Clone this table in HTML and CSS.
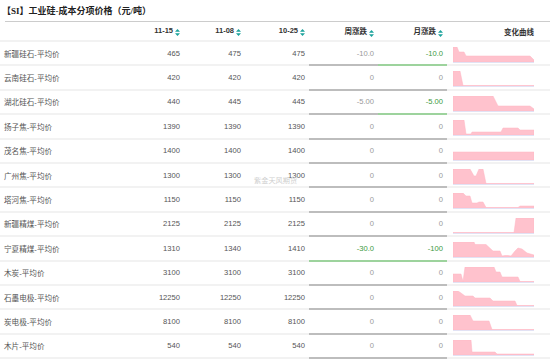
FILE: index.html
```html
<!DOCTYPE html>
<html lang="zh-CN">
<head>
  <meta charset="UTF-8" />
  <title>工业硅-成本分项价格</title>
  <link rel="stylesheet" href="styles.css">
</head>
<body>
  <h1 class="title">【SI】工业硅-成本分项价格（元/吨）</h1>
  <table class="grid">
    <colgroup>
      <col class="c-name"><col class="c-num"><col class="c-num"><col class="c-num3">
      <col class="c-chg"><col class="c-chg"><col class="c-spark">
    </colgroup>
    <thead>
      <tr>
        <th class="name"></th>
        <th>11-15<svg class="sort" viewBox="0 0 5 7"><path d="M2.5 0L5 2.8H0z M2.5 7L0 4.2H5z"/></svg></th>
        <th>11-08<svg class="sort" viewBox="0 0 5 7"><path d="M2.5 0L5 2.8H0z M2.5 7L0 4.2H5z"/></svg></th>
        <th>10-25<svg class="sort" viewBox="0 0 5 7"><path d="M2.5 0L5 2.8H0z M2.5 7L0 4.2H5z"/></svg></th>
        <th>周涨跌<svg class="sort" viewBox="0 0 5 7"><path d="M2.5 0L5 2.8H0z M2.5 7L0 4.2H5z"/></svg></th>
        <th>月涨跌<svg class="sort" viewBox="0 0 5 7"><path d="M2.5 0L5 2.8H0z M2.5 7L0 4.2H5z"/></svg></th>
        <th class="spark-head">变化曲线</th>
      </tr>
    </thead>
    <tbody>
      <tr>
        <td class="name">新疆硅石-平均价</td><td>465</td><td>475</td><td>475</td>
        <td class="chg">-10.0</td><td class="chg down">-10.0</td>
        <td class="spark"><svg viewBox="0 0 81 16"><polygon points="0,15 0,0 4,0 6,5 11,5 13,9 77,9 81,13 81,15"/><line x1="0" y1="15.5" x2="81" y2="15.5"/></svg></td>
      </tr>
      <tr>
        <td class="name">云南硅石-平均价</td><td>420</td><td>420</td><td>420</td>
        <td class="chg">0</td><td class="chg">0</td>
        <td class="spark"><svg viewBox="0 0 81 16"><polygon points="0,15 0,0 7,0 10,14.5 81,14.5 81,15"/><line x1="0" y1="15.5" x2="81" y2="15.5"/></svg></td>
      </tr>
      <tr>
        <td class="name">湖北硅石-平均价</td><td>440</td><td>445</td><td>445</td>
        <td class="chg">-5.00</td><td class="chg down">-5.00</td>
        <td class="spark"><svg viewBox="0 0 81 16"><polygon points="0,15 0,0 40,0 45,10 77,10 81,13 81,15"/><line x1="0" y1="15.5" x2="81" y2="15.5"/></svg></td>
      </tr>
      <tr>
        <td class="name">扬子焦-平均价</td><td>1390</td><td>1390</td><td>1390</td>
        <td class="chg">0</td><td class="chg">0</td>
        <td class="spark"><svg viewBox="0 0 81 16"><polygon points="0,15 0,0 11,0 13,14 18,14 19,12 48,12 50,8 65,8 67,10 81,10 81,15"/><line x1="0" y1="15.5" x2="81" y2="15.5"/></svg></td>
      </tr>
      <tr>
        <td class="name">茂名焦-平均价</td><td>1400</td><td>1400</td><td>1400</td>
        <td class="chg">0</td><td class="chg">0</td>
        <td class="spark"><svg viewBox="0 0 81 16"><polygon points="0,15 0,7 81,7 81,15"/><line x1="0" y1="15.5" x2="81" y2="15.5"/></svg></td>
      </tr>
      <tr>
        <td class="name">广州焦-平均价</td><td>1300</td><td>1300</td><td>1300</td>
        <td class="chg">0</td><td class="chg">0</td>
        <td class="spark"><svg viewBox="0 0 81 16"><polygon points="0,15 0,0 17,0 21,7 23,7 26,0 30,0 33,14.5 81,14.5 81,15"/><line x1="0" y1="15.5" x2="81" y2="15.5"/></svg></td>
      </tr>
      <tr>
        <td class="name">塔河焦-平均价</td><td>1150</td><td>1150</td><td>1150</td>
        <td class="chg">0</td><td class="chg">0</td>
        <td class="spark"><svg viewBox="0 0 81 16"><polygon points="0,15 0,0 10,0 13,3 17,3 19,10 24,10 26,9 30,9 33,14.5 65,14.5 67,13 81,13 81,15"/><line x1="0" y1="15.5" x2="81" y2="15.5"/></svg></td>
      </tr>
      <tr>
        <td class="name">新疆精煤-平均价</td><td>2125</td><td>2125</td><td>2125</td>
        <td class="chg">0</td><td class="chg">0</td>
        <td class="spark"><svg viewBox="0 0 81 16"><polygon points="0,15 0,14.5 61,14.5 63,0 81,0 81,15"/><line x1="0" y1="15.5" x2="81" y2="15.5"/></svg></td>
      </tr>
      <tr>
        <td class="name">宁夏精煤-平均价</td><td>1310</td><td>1340</td><td>1410</td>
        <td class="chg down">-30.0</td><td class="chg down">-100</td>
        <td class="spark"><svg viewBox="0 0 81 16"><polygon points="0,15 0,0 21,0 22,2.5 33,2.5 40,9 47,9 49,14 52,13.5 55,13.5 58,14 62,9 65,6 69,7 74,11 81,13 81,15"/><line x1="0" y1="15.5" x2="81" y2="15.5"/></svg></td>
      </tr>
      <tr>
        <td class="name">木炭-平均价</td><td>3100</td><td>3100</td><td>3100</td>
        <td class="chg">0</td><td class="chg">0</td>
        <td class="spark"><svg viewBox="0 0 81 16"><polygon points="0,15 0,7 8,7 10,14.5 12,0 41,0 43,5 47,5 49,10 65,10 67,14.5 81,14.5 81,15"/><line x1="0" y1="15.5" x2="81" y2="15.5"/></svg></td>
      </tr>
      <tr>
        <td class="name">石墨电极-平均价</td><td>12250</td><td>12250</td><td>12250</td>
        <td class="chg">0</td><td class="chg">0</td>
        <td class="spark"><svg viewBox="0 0 81 16"><polygon points="0,15 0,0 5,0 8,2 12,5 20,5 22,7 37,7 40,10 62,10 64,14.5 81,14.5 81,15"/><line x1="0" y1="15.5" x2="81" y2="15.5"/></svg></td>
      </tr>
      <tr>
        <td class="name">炭电极-平均价</td><td>8100</td><td>8100</td><td>8100</td>
        <td class="chg">0</td><td class="chg">0</td>
        <td class="spark"><svg viewBox="0 0 81 16"><polygon points="0,15 0,0 17,0 20,6 36,6 39,14.5 81,14.5 81,15"/><line x1="0" y1="15.5" x2="81" y2="15.5"/></svg></td>
      </tr>
      <tr>
        <td class="name">木片-平均价</td><td>540</td><td>540</td><td>540</td>
        <td class="chg">0</td><td class="chg">0</td>
        <td class="spark"><svg viewBox="0 0 81 16"><polygon points="0,15 0,0 18,0 19,12 42,12 44,14 81,14 81,15"/><line x1="0" y1="15.5" x2="81" y2="15.5"/></svg></td>
      </tr>
    </tbody>
  </table>
  <div class="watermark">紫金天风期货</div>
</body>
</html>
```

FILE: styles.css
```css
body {
  margin: 0;
  position: relative;
  background: #fff;
  color: #555;
  font-family: "Liberation Sans", "Noto Sans CJK SC", sans-serif;
  overflow: hidden;
}

.title {
  margin: 0 0 0 5px;
  padding-top: 2px;
  height: 19px;
  line-height: 18px;
  text-indent: -3px;
  font-family: "Liberation Serif", "Noto Sans CJK SC", serif;
  font-size: 9px;
  font-weight: bold;
  color: #222;
  border-bottom: 1px solid #ccc;
}

.grid {
  width: 550px;
  table-layout: fixed;
  border-collapse: collapse;
  font-size: 7.6px;
}

.c-name { width: 123px; }
.c-num { width: 61px; }
.c-num3 { width: 64px; }
.c-chg { width: 69px; }
.c-spark { width: 103px; }

th {
  height: 18px;
  padding: 0 4px;
  text-align: right;
  font-weight: bold;
  font-size: 7.5px;
  color: #333;
  border-bottom: 2px solid #f2f2f2;
  white-space: nowrap;
}

th.spark-head {
  padding-right: 16px;
}

.sort {
  width: 5px;
  height: 7px;
  margin-left: 2px;
  vertical-align: -3px;
  fill: #1ba39c;
}

td {
  height: 22.4px;
  padding: 0 4px;
  text-align: right;
  white-space: nowrap;
  border-bottom: 2px solid #f2f2f2;
}

td.name,
th.name {
  text-align: left;
}

td.chg {
  color: #999;
  border-bottom-color: #bdbdbd;
}

td.chg.down {
  color: #3c9a3c;
  border-bottom-color: #9dd39d;
}

td.spark {
  height: 17.4px;
  padding: 5px 0 0 6px;
  vertical-align: top;
}

td.spark svg {
  display: block;
  width: 81px;
  height: 16px;
}

td.spark polygon {
  fill: #ffc2cd;
  stroke: #ffb4c2;
  stroke-width: 0.5;
}

td.spark line {
  stroke: #e2e2f4;
  stroke-width: 1;
}

.watermark {
  position: absolute;
  left: 254px;
  top: 175px;
  font-size: 7.2px;
  color: #cfcfcf;
}
```
